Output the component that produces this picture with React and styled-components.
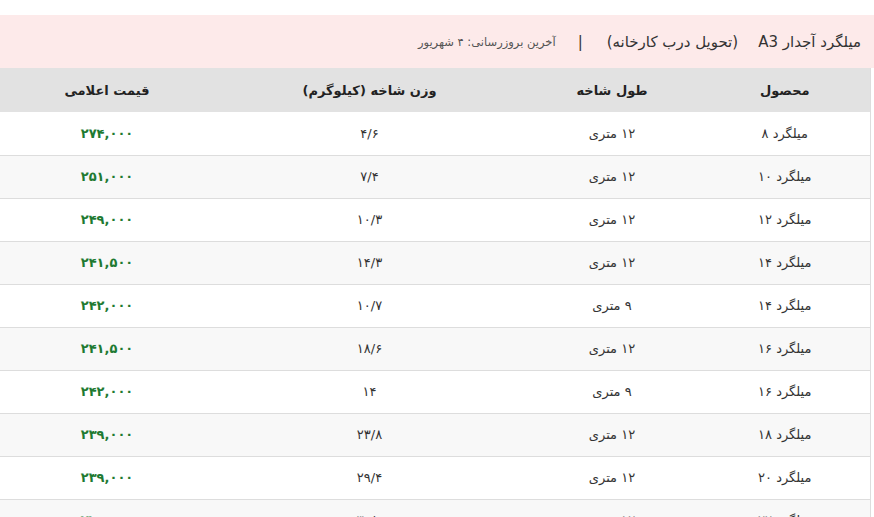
import styled, { createGlobalStyle } from 'styled-components';

const GlobalStyle = createGlobalStyle`
	html, body {
		margin: 0;
		padding: 0;
		background: #fff;
	}
	body {
		font-family: 'DejaVu Sans', 'Noto Sans', sans-serif;
	}
`;

const rows = [
	{ name: 'میلگرد ۸', length: '۱۲ متری', weight: '۴/۶', price: '۲۷۴,۰۰۰' },
	{ name: 'میلگرد ۱۰', length: '۱۲ متری', weight: '۷/۴', price: '۲۵۱,۰۰۰' },
	{ name: 'میلگرد ۱۲', length: '۱۲ متری', weight: '۱۰/۳', price: '۲۴۹,۰۰۰' },
	{ name: 'میلگرد ۱۴', length: '۱۲ متری', weight: '۱۴/۳', price: '۲۴۱,۵۰۰' },
	{ name: 'میلگرد ۱۴', length: '۹ متری', weight: '۱۰/۷', price: '۲۴۲,۰۰۰' },
	{ name: 'میلگرد ۱۶', length: '۱۲ متری', weight: '۱۸/۶', price: '۲۴۱,۵۰۰' },
	{ name: 'میلگرد ۱۶', length: '۹ متری', weight: '۱۴', price: '۲۴۲,۰۰۰' },
	{ name: 'میلگرد ۱۸', length: '۱۲ متری', weight: '۲۳/۸', price: '۲۳۹,۰۰۰' },
	{ name: 'میلگرد ۲۰', length: '۱۲ متری', weight: '۲۹/۴', price: '۲۳۹,۰۰۰' },
	{ name: 'میلگرد ۲۲', length: '۱۲ متری', weight: '۳۵/۵', price: '۲۳۹,۰۰۰' },
];

const App = () => {
	return (
		<StyledPage>
			<GlobalStyle />
			<StyledHeader>
				<StyledTitle>میلگرد آجدار A3</StyledTitle>
				<StyledTitle>(تحویل درب کارخانه)</StyledTitle>
				<StyledDivider>|</StyledDivider>
				<StyledUpdated>آخرین بروزرسانی: ۴ شهریور</StyledUpdated>
			</StyledHeader>
			<StyledTable>
				<colgroup>
					<col style={{ width: 171 }} />
					<col style={{ width: 175 }} />
					<col style={{ width: 310 }} />
					<col style={{ width: 215 }} />
				</colgroup>
				<thead>
					<tr>
						<StyledTh>محصول</StyledTh>
						<StyledTh>طول شاخه</StyledTh>
						<StyledTh>وزن شاخه (کیلوگرم)</StyledTh>
						<StyledTh>قیمت اعلامی</StyledTh>
					</tr>
				</thead>
				<tbody>
					{rows.map((row, i) => (
						<StyledRow key={i} $striped={i % 2 === 1}>
							<StyledTd>{row.name}</StyledTd>
							<StyledTd>{row.length}</StyledTd>
							<StyledTd>{row.weight}</StyledTd>
							<StyledPrice>{row.price}</StyledPrice>
						</StyledRow>
					))}
				</tbody>
			</StyledTable>
		</StyledPage>
	);
};

const StyledPage = styled.div`
	direction: rtl;
	width: 874px;
	height: 517px;
	overflow: hidden;
	padding-top: 15px;
	box-sizing: border-box;
`;

const StyledHeader = styled.div`
	display: flex;
	align-items: center;
	gap: 14px;
	height: 53px;
	padding: 0 13px;
	background: #fdeaea;
	color: #333;
`;

const StyledTitle = styled.span`
	font-size: 15px;
	margin-left: 6px;
`;

const StyledDivider = styled.span`
	font-size: 15px;
	margin: 0 4px 0 8px;
`;

const StyledUpdated = styled.span`
	font-size: 11.5px;
	color: #555;
`;

const StyledTable = styled.table`
	width: 871px;
	margin-right: 3px;
	border-collapse: collapse;
	table-layout: fixed;
	border-right: 1px solid #ddd;
`;

const StyledTh = styled.th`
	height: 44px;
	padding: 0;
	background: #e2e2e2;
	font-size: 13px;
	font-weight: bold;
	color: #222;
	text-align: center;
`;

const StyledRow = styled.tr`
	height: 43px;
	background: ${(p) => (p.$striped ? '#f8f8f8' : '#fff')};
	border-bottom: 1px solid #ddd;
`;

const StyledTd = styled.td`
	padding: 0;
	font-size: 13px;
	color: #333;
	text-align: center;
`;

const StyledPrice = styled(StyledTd)`
	color: #1e7a32;
	font-weight: bold;
`;

export default App;
